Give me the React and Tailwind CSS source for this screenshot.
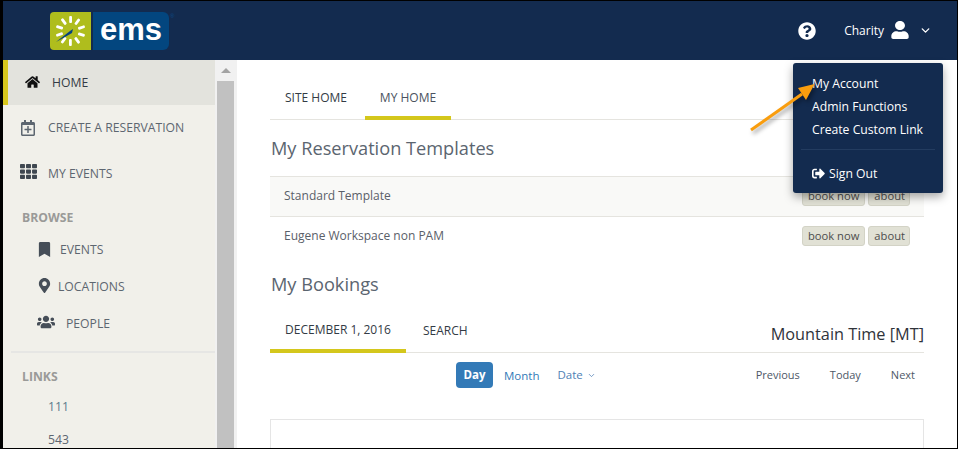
import React from "react";
import { FaHome, FaTh, FaBookmark, FaMapMarkerAlt, FaUsers, FaQuestionCircle, FaUser, FaRegCalendarPlus, FaSignOutAlt } from "react-icons/fa";
import { ChevronDown } from "lucide-react";

function Logo() {
  const rays = [0, 36, 72, 108, 144, 180, 216, 252, 288, 324];
  return (
    <div className="flex h-[38px] items-stretch ml-[47px] relative">
      <div className="w-[41px] bg-[#afbd1d] rounded-l-[4px] flex items-center justify-center">
        <svg width="41" height="38" viewBox="0 0 41 38">
          {rays.map((a) => (
            <rect key={a} x="19.2" y="4" width="2.8" height="7" rx="1" fill="#fff" transform={`rotate(${a} 20.5 19)`} />
          ))}
          <path d="M6 30 L20 19 L23 17 L22 21 L15 25 Z" fill="#06427f" />
        </svg>
      </div>
      <div className="w-[76px] ml-[2px] bg-[#03467f] rounded-r-[6px] flex items-center justify-center">
        <span className="text-white font-bold text-[31px] leading-none -mt-[3px] font-['Liberation_Sans',sans-serif]">ems</span>
      </div>
      <span className="absolute left-[120px] top-[1px] text-[6px] leading-none text-[#0b4a85] font-['Liberation_Sans',sans-serif]">®</span>
    </div>
  );
}

function SideItem({ icon, label, iconW, pt }) {
  return (
    <div className={`flex items-center h-[46px] pl-[17px] text-[12.2px] text-[#5d6670] ${pt}`}>
      <span className={`flex justify-start ${iconW}`}>{icon}</span>
      <span>{label}</span>
    </div>
  );
}

function SubItem({ icon, label, w, pb = "" }) {
  return (
    <div className={`flex items-center h-[37px] pl-[34px] text-[12.2px] text-[#5d6670] ${pb}`}>
      <span className={`flex ${w}`}>{icon}</span>
      <span>{label}</span>
    </div>
  );
}

function Sidebar() {
  return (
    <aside className="w-[212px] shrink-0 bg-[#f1f0ea] flex flex-col">
      <div className="flex items-center h-[46px] bg-[#e3e3dd] border-l-[5px] border-[#d8c71d] pl-[17px] pt-[1px] text-[12.2px] text-[#333b45]">
        <FaHome className="text-[14px] text-[#111] w-[15px] mr-[12px] -mt-[3px]" />
        <span>HOME</span>
      </div>
      <SideItem icon={<FaRegCalendarPlus className="text-[16px] text-[#5d6670]" />} iconW="w-[28px]" pt="pt-[1px]" label="CREATE A RESERVATION" />
      <SideItem icon={<FaTh className="text-[17px] text-[#3f4750] -mt-[5px]" />} iconW="w-[28px]" pt="pt-[3px]" label="MY EVENTS" />
      <div className="h-[38px] flex items-center pl-[19px] pt-[8px] text-[12.2px] font-bold text-[#9a9a98]">BROWSE</div>
      <SubItem icon={<FaBookmark className="text-[15px] text-[#464e58] -mt-[1px]" />} w="w-[23px]" pb="pb-[2px]" label="EVENTS" />
      <SubItem icon={<FaMapMarkerAlt className="text-[15px] text-[#464e58] -mt-[3px]" />} w="w-[21px]" label="LOCATIONS" />
      <SubItem icon={<FaUsers className="text-[18px] text-[#464e58] -mt-[3px]" />} w="w-[29px]" label="PEOPLE" />
      <div className="h-[2px] bg-[#e6e6e4] ml-[8px] mt-[9px]" />
      <div className="h-[49px] flex items-center pl-[19px] text-[12.2px] font-bold text-[#9a9a98]">LINKS</div>
      <div className="pl-[45px] text-[12.2px] text-[#5d7a8c] leading-[16px] -mt-[2px]">111</div>
      <div className="pl-[45px] text-[12.2px] text-[#5d6670] leading-[16px] mt-[17px]">543</div>
    </aside>
  );
}

function Scrollbar() {
  return (
    <div className="w-[22px] shrink-0 bg-[#f1f1f1] pl-[2px] pr-[3px] flex flex-col">
      <div className="h-[21px] flex items-center justify-center">
        <div className="w-0 h-0 border-x-[5px] border-x-transparent border-b-[5px] border-b-[#a3a3a3]" />
      </div>
      <div className="flex-1 bg-[#c1c1c1]" />
    </div>
  );
}

function TemplateRow({ label, shaded }) {
  return (
    <div className={`flex items-center justify-between h-[40px] pl-[14px] pr-[14px] border-t border-[#e5e4df] text-[12px] text-[#5a6069] ${shaded ? "bg-[#f9f9f7]" : "bg-white"}`}>
      <span className="-mt-[2px]">{label}</span>
      <span className="flex gap-[3px] -mt-[1px]">
        <span className="h-[20px] pl-[5px] pr-[5px] flex items-center rounded-[3px] bg-[#e1e1d5] border border-[#d3d3c6] text-[11.2px] text-[#4d4d4d]">book now</span>
        <span className="h-[20px] pl-[5px] pr-[4px] flex items-center rounded-[3px] bg-[#e1e1d5] border border-[#d3d3c6] text-[11.2px] text-[#4d4d4d]">about</span>
      </span>
    </div>
  );
}

function Main() {
  return (
    <main className="flex-1 min-w-0 bg-white pl-[33px] pr-[33px]">
      <div className="flex h-[60px] border-b border-[#e5e4df] items-stretch text-[12px] text-[#333b45]">
        <div className="w-[95px] flex items-center pl-[15px] pt-[17px]">SITE HOME</div>
        <div className="w-[86px] flex justify-center pt-[29px] border-b-[4px] border-[#d4c71c] -mb-px text-[#4a5260]">MY HOME</div>
      </div>
      <h2 className="text-[18.2px] leading-[25px] text-[#5b6570] font-normal mt-[16px] ml-[1px] h-[40px]">My Reservation Templates</h2>
      <TemplateRow label="Standard Template" shaded />
      <TemplateRow label="Eugene Workspace non PAM" />
      <h2 className="text-[18.2px] leading-[25px] text-[#5b6570] font-normal mt-[16px] ml-[1px] h-[45px]">My Bookings</h2>
      <div className="flex h-[36px] border-b border-[#e5e4df] items-stretch text-[12px] text-[#333b45] relative">
        <div className="w-[136px] flex justify-center pt-[4px] border-b-[4px] border-[#d4c71c] -mb-px">DECEMBER 1, 2016</div>
        <div className="ml-[17px] pt-[5px]">SEARCH</div>
        <div className="ml-auto pt-[5px] text-[16.3px] font-medium text-[#2f333a] leading-[24px]">Mountain Time [MT]</div>
      </div>
      <div className="relative h-[66px] flex items-start pt-[9px] text-[11px]">
        <div className="ml-[186px] w-[37px] h-[26px] rounded-[4px] bg-[#337ab7] text-white text-[11.5px] font-bold flex items-center justify-center">Day</div>
        <div className="ml-[11px] h-[26px] flex items-center text-[#337ab7] text-[11.5px] font-medium mt-[1px]">Month</div>
        <div className="ml-[18px] h-[26px] flex items-center text-[#4f7fb5] text-[11.5px]">Date<ChevronDown className="ml-[4px] mt-[1px]" size={9} /></div>
        <div className="ml-auto mr-[9px] h-[26px] flex items-center gap-[30px] text-[#4e5867]">
          <span>Previous</span><span>Today</span><span>Next</span>
        </div>
      </div>
      <div className="h-[60px] border border-[#e5e5e5]" />
    </main>
  );
}

export default function App() {
  return (
    <div className="relative w-[958px] h-[449px] overflow-hidden bg-black pl-[3px] pr-[1px] pt-[1px] pb-[1px] font-['Open_Sans',sans-serif]">
      <div className="relative h-full flex flex-col overflow-hidden">
        <header className="h-[59px] shrink-0 bg-[#132b4f] flex items-center text-white">
          <Logo />
          <div className="ml-auto flex items-center text-[12px] pr-[25px]">
            <FaQuestionCircle className="text-[18px] mr-[28px]" />
            <span>Charity</span>
            <FaUser className="text-[18px] ml-[7px] -mt-[2px] scale-x-110" />
            <ChevronDown className="ml-[10px]" size={13} strokeWidth={2.5} />
          </div>
        </header>
        <div className="flex-1 flex min-h-0">
          <Sidebar />
          <Scrollbar />
          <Main />
        </div>
        <div className="absolute left-[790px] top-[62px] w-[150px] h-[130px] bg-[#132b4f] rounded-[3px] shadow-[0_4px_10px_rgba(0,0,0,0.35)] text-white text-[12.2px] pl-[19px] pt-[9px]">
          <div className="leading-[23px]">My Account</div>
          <div className="leading-[23px]">Admin Functions</div>
          <div className="leading-[23px]">Create Custom Link</div>
          <div className="h-px bg-[#233c60] -ml-[11px] mr-[8px] mt-[8px]" />
          <div className="flex items-center mt-[12px] leading-[23px]">
            <FaSignOutAlt className="text-[13px] mr-[4px]" />Sign Out
          </div>
        </div>
        <svg className="absolute left-[745px] top-[79px] drop-shadow-[2px_3px_2px_rgba(0,0,0,0.35)]" width="70" height="60" viewBox="0 0 70 60">
          <path d="M3 50 L54 14" stroke="#f99d0e" strokeWidth="3" fill="none" />
          <path d="M66.6 4 L50 8 L58 20 Z" fill="#f99d0e" />
        </svg>
      </div>
    </div>
  );
}
